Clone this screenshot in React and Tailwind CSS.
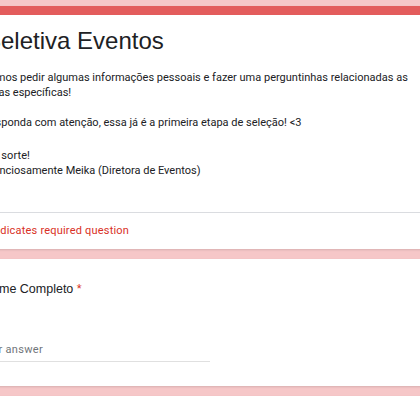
import React from 'react';

const Card = ({ children, className = '' }) => (
    <div className={`bg-white shadow-[0_1px_2px_rgba(0,0,0,0.12)] ${className}`}>{children}</div>
);

export default function App() {
    return (
        <div
            className="w-[420px] h-[420px] overflow-hidden bg-[#f6c7c8] pt-[6px]"
            style={{ fontFamily: 'Roboto, "Liberation Sans", sans-serif' }}
        >
            <div className="-ml-[41px] w-[520px] flex flex-col gap-[10px]">
                <Card className="border-t-[9px] border-[#e35c5c]">
                    <div className="pl-[24px] pt-[10px] pb-[34px] border-b border-[#dadce0]">
                        <h1 className="ml-[2px] font-['Liberation_Sans',Arial,sans-serif] text-[24px] leading-[32px] text-[#202124]">
                            Seletiva Eventos
                        </h1>
                        <div className="mt-[13px] text-[11px] leading-[15px] text-[#202124]">
                            <div>Vamos pedir algumas informações pessoais e fazer uma perguntinhas relacionadas as</div>
                            <div>áreas específicas!</div>
                            <div className="h-[15px]" />
                            <div>Responda com atenção, essa já é a primeira etapa de seleção! &lt;3</div>
                            <div className="h-[18px]" />
                            <div className="-ml-[4px] tracking-[0.1px]">Boa sorte!</div>
                            <div>Atenciosamente Meika (Diretora de Eventos)</div>
                        </div>
                    </div>
                    <div className="pl-[24px] h-[36px] flex items-center text-[11px] tracking-[0.2px] text-[#d93025]">
                        * Indicates required question
                    </div>
                </Card>
                <Card className="h-[127px] pl-[24px] pt-[20px]">
                    <div className="font-['Liberation_Sans',Arial,sans-serif] text-[12.5px] leading-[20px] text-[#202124]">
                        Nome Completo <span className="text-[#d93025]">*</span>
                    </div>
                    <div className="-ml-[4px] mt-[43px] w-[231px] border-b border-[#e0e0e0] pb-[2px] text-[11px] tracking-[0.3px] text-[#70757a]">
                        Your answer
                    </div>
                </Card>
                <Card className="h-[60px]" />
            </div>
        </div>
    );
}
